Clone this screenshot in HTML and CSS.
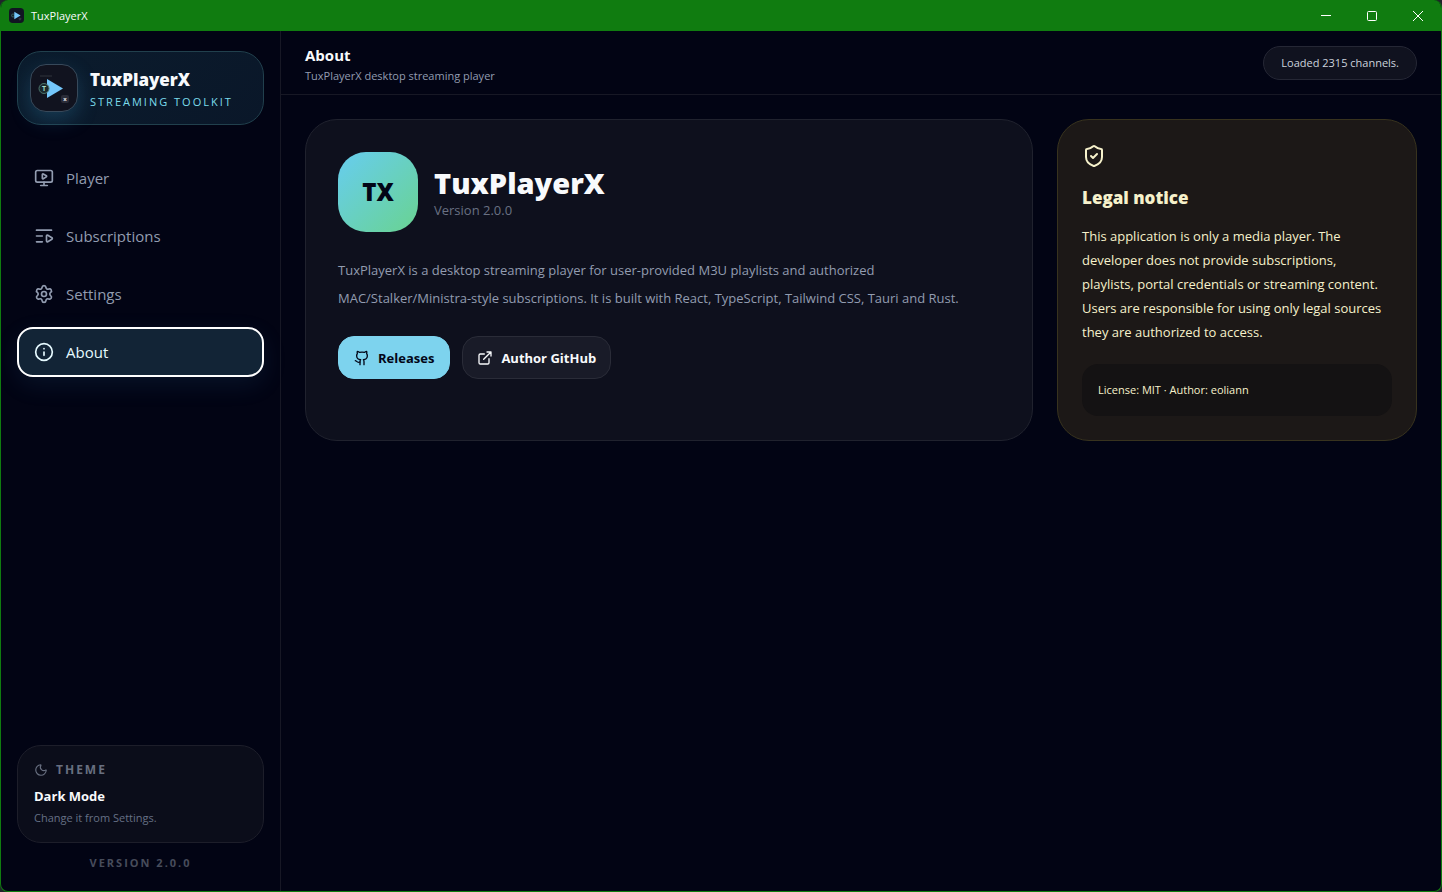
FILE: index.html
```
<!DOCTYPE html>
<html lang="en">
<head>
  <meta charset="UTF-8"/>
  <meta name="viewport" content="width=device-width, initial-scale=1"/>
  <title>TuxPlayerX</title>
  <link rel="stylesheet" href="styles.css">
</head>
<body>
  <div class="window">
    <header class="titlebar">
      <svg class="titlebar-logo" viewBox="0 0 48 48" aria-hidden="true">
        <rect width="48" height="48" rx="12" fill="#111522"/>
        <circle cx="13" cy="24" r="5" fill="#17262b" stroke="#4c7a74" stroke-width="2"/>
        <path d="M17 12l20 12-20 12z" fill="#74c7fa"/>
        <rect x="31" y="31" width="8" height="8" rx="2" fill="#30343f"/>
      </svg>
      <span class="titlebar-name">TuxPlayerX</span>
      <div class="window-buttons">
        <button type="button" aria-label="Minimize"><svg viewBox="0 0 10 10"><path d="M0 4.500h10"/></svg></button>
        <button type="button" aria-label="Maximize"><svg viewBox="0 0 10 10"><rect x=".5" y=".5" width="9" height="9" rx="1"/></svg></button>
        <button type="button" aria-label="Close"><svg viewBox="0 0 10 10"><path d="M0 0l10 10M10 0L0 10"/></svg></button>
      </div>
    </header>

    <div class="app">
      <aside class="sidebar">
        <div class="brand">
          <div class="brand-logo">
            <svg viewBox="0 0 46 46" aria-hidden="true">
              <path d="M9 11h12" stroke="#20232d" stroke-width="2"/>
              <path d="M16 14l16 9.500-16 9.500z" fill="#74c7fa"/>
              <circle cx="13" cy="23.500" r="5" fill="#1b282c" stroke="#4c756c"/>
              <text x="13" y="26" font-size="7" font-weight="700" text-anchor="middle" fill="#a5dcc7">T</text>
              <rect x="30" y="30" width="8" height="8" rx="2" fill="#2a2c38"/>
              <text x="34" y="36" font-size="6" font-weight="700" text-anchor="middle" fill="#e5e7eb">x</text>
            </svg>
          </div>
          <div>
            <p class="brand-name">TuxPlayerX</p>
            <p class="brand-tag">Streaming toolkit</p>
          </div>
        </div>

        <nav class="nav">
          <a href="#player" class="nav-item">
            <svg class="icon" viewBox="0 0 24 24"><path d="M10 7.750a.75.75 0 0 1 1.142-.638l3.664 2.249a.75.75 0 0 1 0 1.278l-3.664 2.250a.75.75 0 0 1-1.142-.64z"/><path d="M12 17v4M8 21h8"/><rect x="2" y="3" width="20" height="14" rx="2"/></svg>
            Player
          </a>
          <a href="#subscriptions" class="nav-item">
            <svg class="icon" viewBox="0 0 24 24"><path d="M21 5H3M10 12H3M10 19H3"/><path d="M15 12.003a1 1 0 0 1 1.517-.859l4.997 2.997a1 1 0 0 1 0 1.718l-4.997 2.997a1 1 0 0 1-1.517-.86z"/></svg>
            Subscriptions
          </a>
          <a href="#settings" class="nav-item">
            <svg class="icon" viewBox="0 0 24 24"><path d="M9.671 4.136a2.340 2.340 0 0 1 4.659 0 2.340 2.340 0 0 0 3.319 1.915 2.340 2.340 0 0 1 2.330 4.033 2.340 2.340 0 0 0 0 3.831 2.340 2.340 0 0 1-2.330 4.033 2.340 2.340 0 0 0-3.319 1.915 2.340 2.340 0 0 1-4.659 0 2.340 2.340 0 0 0-3.320-1.915 2.340 2.340 0 0 1-2.330-4.033 2.340 2.340 0 0 0 0-3.831A2.340 2.340 0 0 1 6.350 6.051a2.340 2.340 0 0 0 3.319-1.915"/><circle cx="12" cy="12" r="3"/></svg>
            Settings
          </a>
          <a href="#about" class="nav-item active" aria-current="page">
            <svg class="icon" viewBox="0 0 24 24"><circle cx="12" cy="12" r="10"/><path d="M12 16v-4M12 8h.01"/></svg>
            About
          </a>
        </nav>

        <div class="theme-card">
          <p class="theme-label">
            <svg class="icon" viewBox="0 0 24 24"><path d="M20.985 12.486a9 9 0 1 1-9.473-9.472c.405-.022.617.460.402.803a6 6 0 0 0 8.268 8.268c.344-.215.825-.004.803.401"/></svg>
            Theme
          </p>
          <p class="theme-value">Dark Mode</p>
          <p class="theme-hint">Change it from Settings.</p>
        </div>
        <p class="sidebar-version">Version 2.0.0</p>
      </aside>

      <main class="main">
        <header class="topbar">
          <div>
            <h1>About</h1>
            <p>TuxPlayerX desktop streaming player</p>
          </div>
          <div class="status" role="status">Loaded 2315 channels.</div>
        </header>

        <div class="content">
          <section class="card">
            <div class="hero">
              <div class="hero-logo">TX</div>
              <div>
                <h2>TuxPlayerX</h2>
                <p>Version 2.0.0</p>
              </div>
            </div>
            <p class="description">TuxPlayerX is a desktop streaming player for user-provided M3U playlists and authorized MAC/Stalker/Ministra-style subscriptions. It is built with React, TypeScript, Tailwind CSS, Tauri and Rust.</p>
            <div class="actions">
              <button type="button" class="btn btn-primary">
                <svg class="icon" viewBox="0 0 24 24"><path d="M15 22v-4a4.800 4.800 0 0 0-1-3.500c3 0 6-2 6-5.500.08-1.250-.27-2.480-1-3.500.28-1.150.28-2.350 0-3.500 0 0-1 0-3 1.500-2.640-.5-5.360-.5-8 0C6 2 5 2 5 2c-.3 1.150-.3 2.350 0 3.500A5.403 5.403 0 0 0 4 9c0 3.500 3 5.500 6 5.500-.39.490-.68 1.050-.85 1.650-.17.600-.22 1.230-.15 1.850v4"/><path d="M9 18c-4.510 2-5-2-7-2"/></svg>
                Releases
              </button>
              <button type="button" class="btn">
                <svg class="icon" viewBox="0 0 24 24"><path d="M15 3h6v6M10 14L21 3"/><path d="M18 13v6a2 2 0 0 1-2 2H5a2 2 0 0 1-2-2V8a2 2 0 0 1 2-2h6"/></svg>
                Author GitHub
              </button>
            </div>
          </section>

          <section class="card card-legal">
            <svg class="icon" viewBox="0 0 24 24"><path d="M20 13c0 5-3.500 7.500-7.660 8.950a1 1 0 0 1-.67-.01C7.500 20.500 4 18 4 13V6a1 1 0 0 1 1-1c2 0 4.500-1.200 6.240-2.720a1.170 1.170 0 0 1 1.520 0C14.510 3.810 17 5 19 5a1 1 0 0 1 1 1z"/><path d="M9 12l2 2 4-4"/></svg>
            <h2>Legal notice</h2>
            <p>This application is only a media player. The developer does not provide subscriptions, playlists, portal credentials or streaming content. Users are responsible for using only legal sources they are authorized to access.</p>
            <div class="license">License: MIT · Author: eoliann</div>
          </section>
        </div>
      </main>
    </div>
  </div>
</body>
</html>
```
FILE: styles.css
```
* { box-sizing:border-box; margin:0; padding:0 }
body {
  background:#20242a;
  color:#f8fafc;
  font-family:'Segoe UI', 'Open Sans', 'Noto Sans', sans-serif;
  font-size:13px; line-height:20px;
}
button { font:inherit; color:inherit; border:none; background:none; cursor:pointer }
a { color:inherit; text-decoration:none }

.icon {
  width:20px; height:20px; flex:none;
  fill:none; stroke:currentColor; stroke-width:2;
  stroke-linecap:round; stroke-linejoin:round;
}

.window {
  display:flex; flex-direction:column;
  min-height:100vh;
  border:1px solid #107c10; border-top:none; border-radius:8px;
  background:#020414; overflow:hidden;
}

/* title bar */
.titlebar {
  display:flex; align-items:center; gap:7px;
  height:31px; padding-left:8px;
  background:#107c10; font-size:11px;
}
.titlebar-logo { width:15px; height:15px }
.window-buttons { display:flex; align-self:stretch; margin-left:auto }
.window-buttons button { display:grid; place-items:center; width:46px }
.window-buttons svg { width:10px; height:10px; fill:none; stroke:#fff; overflow:visible }

.app { display:flex; flex:1 }

/* sidebar */
.sidebar {
  display:flex; flex-direction:column; flex:none;
  width:280px; padding:20px 16px;
  border-right:1px solid #171825;
}
.brand {
  display:flex; align-items:center; gap:12px;
  padding:12px; border:1px solid #21404d; border-radius:24px;
  background:linear-gradient(135deg, #0b1c2d, #0a1729);
}
.brand-logo {
  width:48px; height:48px;
  border:1px solid #37495a; border-radius:16px;
  background:#11131f; overflow:hidden;
  box-shadow:0 8px 20px rgba(56,150,200,.25);
}
.brand-logo svg { display:block }
.brand-name { font-size:17px; font-weight:800; line-height:28px }
.brand-tag {
  color:#7bdcec; font-size:11px; line-height:16px;
  letter-spacing:2px; text-transform:uppercase;
}

.nav { display:flex; flex-direction:column; gap:8px; margin-top:28px }
.nav-item {
  display:flex; align-items:center; gap:12px;
  height:50px; padding:0 17px; border-radius:16px;
  color:#929cb0; font-size:15px;
}
.nav-item.active {
  padding:0 15px; border:2px solid #fff;
  background:#122436; color:#e6faff;
  box-shadow:0 8px 24px rgba(56,130,190,.12);
}

.theme-card {
  margin-top:auto; padding:16px;
  border:1px solid #1d1e2a; border-radius:24px;
  background:#0b0d1a;
}
.theme-label {
  display:flex; align-items:center; gap:8px;
  color:#686f80; font-size:12px; font-weight:700; line-height:16px;
  letter-spacing:2px; text-transform:uppercase;
}
.theme-label .icon { width:14px; height:14px }
.theme-value { margin-top:8px; font-weight:700 }
.theme-hint { margin-top:4px; color:#667085; font-size:11px; line-height:16px }
.sidebar-version {
  margin-top:12px; color:#474c5b; font-size:11px; font-weight:700; line-height:16px;
  letter-spacing:2px; text-align:center; text-transform:uppercase;
}

/* main area */
.main { flex:1; min-width:0 }
.topbar {
  display:flex; align-items:center; justify-content:space-between;
  height:64px; padding:0 24px;
  border-bottom:1px solid #171825;
}
.topbar h1 { font-size:15px; font-weight:700; line-height:26px }
.topbar p { color:#929cb0; font-size:11px; line-height:16px }
.status {
  padding:8px 17px; border:1px solid #252735; border-radius:17px;
  background:#10121f; color:#ccd2dd; font-size:11px; line-height:16px;
}

.content {
  display:grid; grid-template-columns:1fr 360px; gap:24px;
  padding:24px;
}
.card {
  padding:32px; border:1px solid #20222e; border-radius:32px;
  background:#0e101d;
}
.hero { display:flex; align-items:center; gap:16px }
.hero-logo {
  display:grid; place-items:center;
  width:80px; height:80px; border-radius:28px;
  background:linear-gradient(135deg, #67cdf0, #69d391);
  color:#020617; font-size:24px; font-weight:800;
}
.hero h2 { font-size:29px; font-weight:800; line-height:36px }
.hero p { color:#697083; line-height:18px }
.description { margin-top:24px; color:#929cb0; line-height:28px }
.actions { display:flex; flex-wrap:wrap; gap:12px; margin-top:24px }
.btn {
  display:flex; align-items:center; gap:8px;
  height:43px; padding:0 14px;
  border:1px solid #2a2c38; border-radius:16px;
  background:#191b28; font-weight:700;
}
.btn .icon { width:16px; height:16px }
.btn-primary { padding:0 15px; border-color:#7dd3ee; background:#7dd3ee; color:#020617 }

.card-legal {
  padding:24px; border-color:#38331e;
  background:#1c1817; color:#f6f1cb;
}
.card-legal .icon { display:block; width:24px; height:24px }
.card-legal h2 { margin-top:16px; font-size:17px; font-weight:800; line-height:28px }
.card-legal p { margin-top:12px; padding-right:4px; line-height:24px }
.license {
  margin-top:20px; padding:16px; border-radius:16px;
  background:#141213; font-size:11px;
}
```
